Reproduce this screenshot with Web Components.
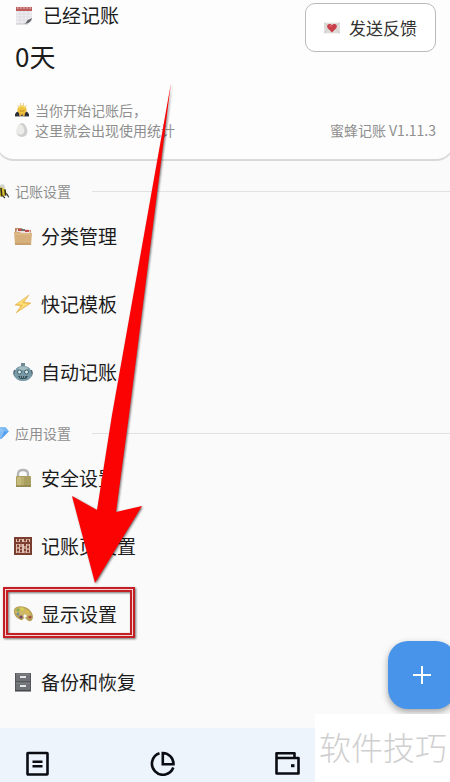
<!DOCTYPE html>
<html lang="zh-CN">
<head>
<meta charset="utf-8">
<meta name="viewport" content="width=device-width, initial-scale=1">
<title>蜜蜂记账</title>
<style>
html, body {
  margin: 0;
  height: 100%;
}
body {
  font-family: "Noto Sans CJK SC", sans-serif;
  color: #1c1c1c;
  background: #fafafa;
  overflow: hidden;
}
</style>
</head>
<body>
<settings-page>
  <usage-card slot="card">
    <span slot="title">已经记账</span>
    <span slot="days">0天</span>
    <span slot="hint-one">当你开始记账后，</span>
    <span slot="hint-two">这里就会出现使用统计</span>
    <span slot="feedback">发送反馈</span>
    <span slot="version">蜜蜂记账 V1.11.3</span>
  </usage-card>
  <settings-group icon="bee">
    <span slot="title">记账设置</span>
    <settings-row icon="folder">分类管理</settings-row>
    <settings-row icon="bolt">快记模板</settings-row>
    <settings-row icon="robot">自动记账</settings-row>
  </settings-group>
  <settings-group icon="gem">
    <span slot="title">应用设置</span>
    <settings-row icon="lock">安全设置</settings-row>
    <settings-row icon="abacus">记账页设置</settings-row>
    <settings-row icon="palette">显示设置</settings-row>
    <settings-row icon="cabinet">备份和恢复</settings-row>
  </settings-group>
  <add-button slot="overlay"></add-button>
  <tab-bar slot="tabs"></tab-bar>
  <guide-arrow slot="overlay"></guide-arrow>
  <site-mark slot="overlay">软件技巧</site-mark>
</settings-page>

<script>
const ICONS = {
  calendar: `
    <path d="M2 3h16v13l-4 3H2z" fill="#eeecee"/>
    <path d="M2 6h16M2 9h16M2 12h16M2 15h14M6 5v14M10 5v14M14 5v12" stroke="#d9d9df" stroke-width=".7"/>
    <path d="M2 2h16v4H2z" fill="#bd5d5e"/>
    <path d="M4 1v3M7 1v3M10 1v3M13 1v3M16 1v3" stroke="#ebdada" stroke-width=".8"/>
    <path d="M18 13c-1 4-4 6-8 6 3-1 2-3 4-4z" fill="#62666b"/>
    <path d="M2 19h12" stroke="#c5c5c8"/>`,
  bow: `
    <path d="M4 4l2 2M8 1v3M12 1v3M16 4l-2 2" stroke="#e4bf69" stroke-width="1"/>
    <path d="M1 18q0-5 4-6h10q4 1 4 6z" fill="#303646"/>
    <circle cx="10" cy="10" r="6" fill="#edc23f"/>
    <path d="M6 7q4-3 8 0" fill="none" stroke="#f7dc72" stroke-width="1.5"/>
    <path d="M7 11q3 1 6 0" fill="none" stroke="#bd7f26"/>
    <path d="M1 18q0-4 4-5l3 5zm18 0q0-4-4-5l-3 5z" fill="#292e38"/>
    <path d="M6 17q0-3 3-3v4zm8 0q0-3-3-3v4z" fill="#e5b242"/>`,
  egg: `
    <path d="M10 1c4 0 7 7 7 11s-3 7-7 7-7-3-7-7 3-11 7-11z" fill="#cfcfcd"/>
    <path d="M8 3c3 0 5 5 5 8s-2 5-5 5-5-2-5-5 2-8 5-8z" fill="#ecece8"/>`,
  letter: `
    <path d="M1 4h18v12H1z" fill="#deddda"/>
    <path d="M1 4l9 7 9-7M1 16l6-6M19 16l-6-6" fill="none" stroke="#c9c8c5"/>
    <path d="M10 15L5 10c-2-4 3-6 5-3 2-3 7-1 5 3z" fill="#c93f49"/>
    <path d="M7 8q2-2 3 1" stroke="#e46e75" fill="none"/>`,
  bee: `
    <path d="M8 3c5-4 9 0 6 6H7z" fill="#d0d4ce"/>
    <path d="M1 8c4-5 13-3 15 1 3 6-1 9-7 8-5 0-8-4-8-9z" fill="#d9c02e"/>
    <path d="M5 6l1 10M10 6l1 11M15 8l1 8" stroke="#302e22" stroke-width="2"/>
    <path d="M7 15l-2 4M12 16l3 3M17 13l3 5" stroke="#35332a" stroke-width="1.5"/>`,
  gem: `
    <path d="M4 3h12l4 5-10 10L0 8z" fill="#4f9deb"/>
    <path d="M4 3h12l4 5H0z" fill="#78b8f3"/>
    <path d="M10 3l4 5-4 10L6 8z" fill="#9bcbf5" opacity=".7"/>`,
  folder: `
    <path d="M2 2h7l1 2h8v6H2z" fill="#bd8964"/>
    <path d="M4 3h12l2 5H3z" fill="#eee1dc"/>
    <path d="M5 3h3v2H5zM12 4h4v2h-4z" fill="#bf4b4b"/>
    <path d="M8 3h4v2H8z" fill="#727275"/>
    <path d="M1 6h6l1 1h11l-1 12H2z" fill="#d6af7b"/>
    <path d="M2 8h16" stroke="#e3c394"/>
    <path d="M2 18h16" stroke="#bb9261"/>`,
  bolt: `
    <path d="M16 1L2 11l6 1-5 7 15-10-7-1z" fill="#eebe4d" stroke="#dfae51" stroke-width=".5"/>
    <path d="M14 3L4 10l6 1-4 5 9-6-6-1z" fill="#ffe17a"/>`,
  robot: `
    <path d="M8 4V1h4v3" fill="#718995"/>
    <path d="M1 8h3v7H2q-3-3-1-7zm18 0h-3v7h2q3-3 1-7z" fill="#48636e"/>
    <path d="M2 9q1-5 8-5t8 5l1 4q-2 6-9 6t-9-6z" fill="#7899a6"/>
    <path d="M5 6q5-3 10 0l-1 2H6z" fill="#a5bdc3"/>
    <circle cx="6.500" cy="10" r="2" fill="#d8eceb" stroke="#42616e"/>
    <circle cx="13.500" cy="10" r="2" fill="#d8eceb" stroke="#42616e"/>
    <path d="M5 14h10l-2 3H7z" fill="#38545f"/>
    <path d="M7 15h6" stroke="#c5d3d3" stroke-dasharray="1 1"/>`,
  lock: `
    <path d="M5 10V6q0-4 5-4t5 4v4" fill="none" stroke="#b4b6b5" stroke-width="2.3"/>
    <rect x="3" y="8" width="15" height="11" rx="1" fill="#a99f61"/>
    <path d="M4 9h4v9H4z" fill="#c7bb7b"/>
    <path d="M8 9h3v9H8z" fill="#b8ae6d"/>
    <path d="M3 18h15" stroke="#7e7544"/>`,
  abacus: `
    <path d="M1 1h18v18H1z" fill="#793e30"/>
    <path d="M3 3h14v3H3zM3 8h14v9H3z" fill="#dfc2b3"/>
    <path d="M5 2v16M8 2v16M12 2v16M15 2v16" stroke="#894838" stroke-width=".8"/>
    <path d="M4 4h2M7 5h2M11 4h2M14 5h2M4 10h2M7 12h2M11 9h2M14 11h2M4 14h2M7 15h2M11 14h2M14 15h2" stroke="#81402f" stroke-width="2"/>`,
  palette: `
    <path d="M1 8C0 3 6 1 12 3c6 2 10 9 7 13-2 3-5 0-7-2-2-1-1 3-4 2C5 15 1 12 1 8z" fill="#b6a157"/>
    <path d="M2 7c0-4 6-5 11-2s6 7 5 9c-5-2-4-5-9-3-4 1-7-1-7-4z" fill="#cdb867"/>
    <circle cx="5" cy="6" r="1.7" fill="#92ad51"/>
    <circle cx="9" cy="5" r="1.7" fill="#d6d150"/>
    <circle cx="14" cy="8" r="1.7" fill="#dfb950"/>
    <circle cx="5" cy="10" r="1.4" fill="#788b94"/>
    <circle cx="8" cy="13" r="1.6" fill="#76476f"/>
    <circle cx="17" cy="13" r="1.6" fill="#a74e45"/>
    <circle cx="12" cy="12" r="1.7" fill="#faf8f4"/>`,
  cabinet: `
    <path d="M2 1h16v18H2z" fill="#53565a"/>
    <path d="M3 2h14v7H3zM3 11h14v7H3z" fill="#6e7276"/>
    <path d="M3 2h14M3 11h14" stroke="#878a8d"/>
    <path d="M7 4h6v2H7zM7 13h6v2H7z" fill="#e4e6e6"/>
    <path d="M2 19h16" stroke="#393c40"/>`
};

class EmojiIcon extends HTMLElement {
  constructor() {
    super();
    this.attachShadow({ mode: "open" });
  }
  connectedCallback() {
    this.shadowRoot.innerHTML = `
    <style>
    :host {
      display: block;
      flex: none;
      width: var(--icon-size, 18px);
      height: var(--icon-size, 18px);
    }
    svg {
      display: block;
      width: 100%;
      height: 100%;
      overflow: visible;
    }
    </style>
    <svg viewBox="1 1 18 18" aria-hidden="true">${ICONS[this.getAttribute("name")]}</svg>
    `;
  }
}

class SettingsPage extends HTMLElement {
  constructor() {
    super();
    this.attachShadow({ mode: "open" }).innerHTML = `
    <style>
    :host {
      display: flex;
      flex-direction: column;
      position: relative;
      height: 100%;
      overflow: hidden;
    }
    main {
      display: flex;
      flex-direction: column;
      gap: 16px;
      flex: 1;
      min-height: 0;
      padding-top: 19px;
    }
    </style>
    <slot name="card"></slot>
    <main><slot></slot></main>
    <slot name="tabs"></slot>
    <slot name="overlay"></slot>
    `;
  }
}

class UsageCard extends HTMLElement {
  constructor() {
    super();
    this.attachShadow({ mode: "open" }).innerHTML = `
    <style>
    :host {
      display: flex;
      justify-content: space-between;
      box-sizing: border-box;
      margin: 0 -4px;
      padding: 3px 17px 19px 18px;
      background: #fdfdfd;
      border: solid #d9d9d9;
      border-width: 0 1px 2px;
      border-radius: 0 0 18px 18px;
    }
    .side {
      display: flex;
      flex-direction: column;
      justify-content: space-between;
    }
    .side.end {
      align-items: flex-end;
    }
    .title {
      display: flex;
      align-items: center;
      gap: 10px;
      font-size: 19px;
      line-height: 24px;
    }
    .days {
      margin: 11px 0 26px;
      font-size: 26px;
      line-height: 36px;
    }
    .hint {
      display: flex;
      align-items: center;
      gap: 6px;
      --icon-size: 14px;
    }
    .hint, .version {
      font-size: 14px;
      line-height: 20px;
      color: #8f8f8f;
    }
    button {
      display: flex;
      align-items: center;
      gap: 9px;
      height: 49px;
      padding: 0 18px;
      font: inherit;
      font-size: 17px;
      color: #333;
      background: #fff;
      border: 1px solid #bababa;
      border-radius: 10px;
      --icon-size: 16px;
    }
    </style>
    <div class="side">
      <div class="title"><emoji-icon name="calendar"></emoji-icon><slot name="title"></slot></div>
      <div class="days"><slot name="days"></slot></div>
      <div class="hint"><emoji-icon name="bow"></emoji-icon><slot name="hint-one"></slot></div>
      <div class="hint"><emoji-icon name="egg"></emoji-icon><slot name="hint-two"></slot></div>
    </div>
    <div class="side end">
      <button type="button"><emoji-icon name="letter"></emoji-icon><slot name="feedback"></slot></button>
      <div class="version"><slot name="version"></slot></div>
    </div>
    `;
  }
}

class SettingsGroup extends HTMLElement {
  constructor() {
    super();
    this.attachShadow({ mode: "open" });
  }
  connectedCallback() {
    this.shadowRoot.innerHTML = `
    <style>
    :host {
      display: block;
    }
    header {
      display: flex;
      align-items: center;
      gap: 7px;
      height: 22px;
      margin-left: -6px;
      font-size: 14px;
      line-height: 22px;
      color: #8f8f8f;
      --icon-size: 14px;
    }
    header::after {
      content: "";
      flex: 1;
      height: 1px;
      margin-left: 14px;
      background: #e2e2e2;
    }
    </style>
    <header><emoji-icon name="${this.getAttribute("icon")}"></emoji-icon><slot name="title"></slot></header>
    <nav><slot></slot></nav>
    `;
  }
}

class SettingsRow extends HTMLElement {
  constructor() {
    super();
    this.attachShadow({ mode: "open" });
  }
  connectedCallback() {
    this.shadowRoot.innerHTML = `
    <style>
    :host {
      display: block;
    }
    a {
      display: flex;
      align-items: center;
      gap: 9px;
      height: 68px;
      padding: 0 14px;
      font-size: 19px;
      color: inherit;
      text-decoration: none;
    }
    span {
      padding-bottom: 2px;
    }
    </style>
    <a href="#"><emoji-icon name="${this.getAttribute("icon")}"></emoji-icon><span><slot></slot></span></a>
    `;
  }
}

class AddButton extends HTMLElement {
  constructor() {
    super();
    this.attachShadow({ mode: "open" }).innerHTML = `
    <style>
    :host {
      position: absolute;
      right: -6px;
      bottom: 73px;
    }
    button {
      display: grid;
      place-items: center;
      width: 68px;
      height: 68px;
      padding: 0;
      border: 0;
      border-radius: 20px;
      background: #4894ea;
      box-shadow: 0 3px 7px rgb(0 0 0 / 35%);
    }
    </style>
    <button type="button" aria-label="+">
      <svg width="18" height="18" viewBox="0 0 18 18"><path d="M9 0v18M0 9h18" stroke="#fff" stroke-width="2"/></svg>
    </button>
    `;
  }
}

class TabBar extends HTMLElement {
  constructor() {
    super();
    this.attachShadow({ mode: "open" }).innerHTML = `
    <style>
    :host {
      display: flex;
      gap: 100px;
      flex: none;
      padding: 23px 25px 6px;
      background: #edf4fc;
    }
    button {
      width: 25px;
      height: 25px;
      padding: 0;
      border: 0;
      background: none;
      color: #0b0d12;
    }
    svg {
      display: block;
      fill: none;
      stroke: currentColor;
      stroke-width: 2.6;
    }
    </style>
    <button type="button"><svg width="25" height="25" viewBox="0 0 25 25">
      <rect x="2.500" y="2" width="20" height="21.500" rx=".5"/>
      <path d="M7.500 10.700h10M7.500 15.200h10"/>
    </svg></button>
    <button type="button"><svg width="25" height="25" viewBox="0 0 25 25">
      <path d="M9.500 2.300A11 11 0 1 0 23.300 16.500"/>
      <path d="M12.800 2v11.200h10.700A11 11 0 0 0 12.800 2z"/>
    </svg></button>
    <button type="button"><svg width="25" height="25" viewBox="0 0 25 25">
      <path d="M1.500 7V2.300h18V7M1.500 7h22v15.500h-22z" stroke-linejoin="round"/>
      <path d="M16 14.700h3.500" stroke-width="3"/>
    </svg></button>
    `;
  }
}

class GuideArrow extends HTMLElement {
  constructor() {
    super();
    this.attachShadow({ mode: "open" }).innerHTML = `
    <style>
    :host {
      position: absolute;
      top: 0;
      left: 0;
      pointer-events: none;
    }
    svg {
      display: block;
      filter: drop-shadow(1px 1px 1px rgb(0 0 0 / 55%));
    }
    </style>
    <svg width="180" height="650" viewBox="0 0 180 650" aria-hidden="true">
      <path d="M171 83L129 415L116 512L142 506L95 583L72 496L97 510L112 415z" fill="#fb0203"/>
      <rect x="5.500" y="589.500" width="127" height="46" fill="none" stroke="#c31f24" stroke-width="5"/>
      <rect x="5.500" y="589.500" width="127" height="46" fill="none" stroke="#f3d3d3" stroke-width="1"/>
    </svg>
    `;
  }
}

class SiteMark extends HTMLElement {
  constructor() {
    super();
    this.attachShadow({ mode: "open" }).innerHTML = `
    <style>
    :host {
      position: absolute;
      right: 0;
      bottom: 0;
      padding: 8px 3px 12px 4px;
      font-size: 32px;
      font-weight: 300;
      line-height: 48px;
      color: #cfcfcf;
      background: #fff;
    }
    </style>
    <slot></slot>
    `;
  }
}

customElements.define("emoji-icon", EmojiIcon);
customElements.define("settings-page", SettingsPage);
customElements.define("usage-card", UsageCard);
customElements.define("settings-group", SettingsGroup);
customElements.define("settings-row", SettingsRow);
customElements.define("add-button", AddButton);
customElements.define("tab-bar", TabBar);
customElements.define("guide-arrow", GuideArrow);
customElements.define("site-mark", SiteMark);
</script>
</body>
</html>
